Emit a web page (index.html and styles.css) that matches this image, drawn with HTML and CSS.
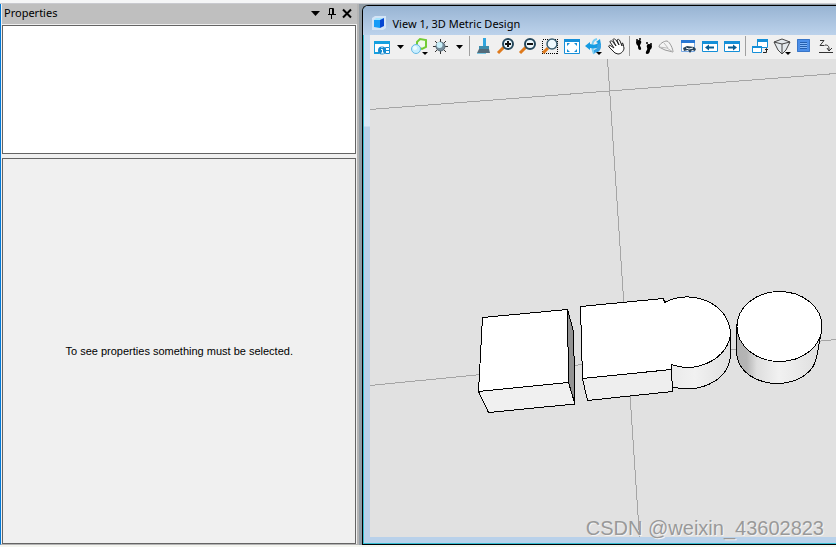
FILE: index.html
```html
<!DOCTYPE html>
<html lang="en">
<head>
<meta charset="utf-8">
<title>View 1, 3D Metric Design</title>
<link rel="stylesheet" href="styles.css">
</head>
<body>
<div class="ribbon-edge"></div>
<main class="workspace">
  <section class="panel" aria-labelledby="panel-title">
    <header class="panel-header">
      <h2 class="panel-title" id="panel-title">Properties</h2>
      <button class="panel-button" aria-label="Panel menu"><svg width="16" height="16"><path d="M3 5h9L7.500 10z"/></svg></button>
      <button class="panel-button" aria-label="Pin"><svg width="16" height="16" fill="none" stroke="#000"><path d="M5.500 8V2.500h4V8M4 8.500h8M7.500 9v4" /><path d="M9 3v5" stroke-width="2"/></svg></button>
      <button class="panel-button" aria-label="Close"><svg width="16" height="16" fill="none" stroke="#000" stroke-width="2"><path d="M3 3.500l8 8M11 3.500l-8 8"/></svg></button>
    </header>
    <div class="selection-box"></div>
    <div class="details-box"><p>To see properties something must be selected.</p></div>
  </section>

  <section class="view" aria-labelledby="view-title">
    <header class="view-header">
      <svg width="16" height="16"><path d="M1 3l3-2h11v12l-3 2H1z" fill="#d3e4f6"/><path d="M3 5l2-2h8l-2 2z" fill="#a4e4ff"/><path d="M3 5h6v8l-6-1z" fill="#169cf8"/><path d="M9 5l4-2v8l-4 2z" fill="#0546d2"/></svg>
      <h1 class="view-title" id="view-title">View 1, 3D Metric Design</h1>
    </header>
    <div class="toolbar" role="toolbar" aria-label="View tools">
      <button class="tool" aria-label="View attributes"><svg width="22" height="22"><path d="M3.500 18V6.500h15V12" fill="#fff" stroke="#16a0df"/><path d="M3 6h16v3H3z" fill="#16a0df"/><path d="M3 18h5" stroke="#16a0df" stroke-width="2"/><circle cx="11" cy="15.500" r="4" fill="#168bd0"/><path d="M10 14.500h1.500V18M10 18h3M11 12v1" stroke="#fff" fill="none"/><path d="M14.500 12.500h4v6h-4z" fill="#fff" stroke="#168bd0"/><path d="M15 15.500h3" stroke="#168bd0"/></svg></button>
      <button class="tool tool-menu" aria-label="View attributes menu"><svg width="15" height="22"><path d="M4 10h7l-3.500 4z"/></svg></button>
      <button class="tool" aria-label="Display style"><svg width="22" height="22"><path d="M9 7l3-3 6 1v7l-4 2-5-2z" fill="#f1f9eb" stroke="#72cc35" stroke-width="2"/><circle cx="8" cy="14" r="4.500" fill="#c8eeff" stroke="#65b8e3"/><circle cx="7" cy="13" r="2" fill="#effcff"/><path d="M14 17h6l-3 3z"/></svg></button>
      <button class="tool" aria-label="Adjust brightness"><svg width="22" height="22"><path d="M10.500 4v15M3 11.500h15M5 6l11 11M16 6L5 17" stroke="#333"/><circle cx="10.500" cy="11.500" r="4.500" fill="#778d9b" stroke="#596c78"/><circle cx="9.500" cy="10" r="3" fill="#c9f0fb"/></svg></button>
      <button class="tool tool-menu" aria-label="Brightness menu"><svg width="15" height="22"><path d="M4 10h7l-3.500 4z"/></svg></button>
      <span class="separator"></span>
      <button class="tool" aria-label="Update view"><svg width="22" height="22"><path d="M10 3h3v8h-3z" fill="#30a5df"/><path d="M6 11h10v3H6z" fill="#3f8dad"/><path d="M6 14h10l1 4H4z" fill="#536b7a"/><path d="M4 18.500h9" stroke="#79c8e5"/></svg></button>
      <button class="tool" aria-label="Zoom in"><svg width="22" height="22"><path d="M3 18l6-6" stroke="#df7a1c" stroke-width="3"/><circle cx="13" cy="9" r="5" fill="#eefaff" stroke="#24475c" stroke-width="2"/><path d="M10 9h6M13 6v6" stroke="#111" stroke-width="2"/></svg></button>
      <button class="tool" aria-label="Zoom out"><svg width="22" height="22"><path d="M3 18l6-6" stroke="#df7a1c" stroke-width="3"/><circle cx="13" cy="9" r="5" fill="#eefaff" stroke="#24475c" stroke-width="2"/><path d="M10 9h6" stroke="#111" stroke-width="2"/></svg></button>
      <button class="tool" aria-label="Window area"><svg width="22" height="22"><path d="M3.500 4.500h15v14h-15z" fill="none" stroke="#000" stroke-dasharray="1 1" shape-rendering="crispEdges"/><path d="M4 18l5-5" stroke="#df7a1c" stroke-width="3"/><circle cx="13" cy="9" r="5" fill="#eefaff" stroke="#3b5f72" stroke-width="1.500"/></svg></button>
      <button class="tool" aria-label="Fit view"><svg width="22" height="22"><path d="M3.500 4.500h15v14h-15z" fill="#fff" stroke="#168fd8"/><path d="M3 4h16v3H3z" fill="#168fd8"/><path d="M6 8h3L6 11zM16 8v3l-3-3zM6 17v-3l3 3zM16 17h-3l3-3z" fill="#168fd8"/></svg></button>
      <button class="tool" aria-label="Rotate view"><svg width="22" height="22"><path d="M14 4c-5 1-6 7-3 15" fill="none" stroke="#79cdf3" stroke-width="2"/><path d="M2 11l5-4v2c3 1 6 1 8-1l-2-1 4-3 1 6c-2 3-6 4-11 3v2z" fill="#159be2"/><path d="M14 10l3-2c2 3 1 7-2 9l-4 1v-3c3-1 4-3 3-5z" fill="#37a1e2"/><path d="M13 17h6l-3 3z"/></svg></button>
      <button class="tool" aria-label="Pan view"><svg width="22" height="22"><path d="M10 18L4 12c-1-2 1-2 2-1l3 2-4-6c0-2 2-1 3 0l3 4-3-6c0-2 2-1 3 0l3 5-2-5c1-1 2-1 3 1l2 5v-3c2 0 1 3 2 5 0 3-3 6-6 6z" fill="#fff" stroke="#222"/></svg></button>
      <span class="separator"></span>
      <button class="tool" aria-label="Walk"><svg width="22" height="22"><path d="M3 7c0-2 4-3 5-1s-1 3-1 5c1 1 2 4 0 4s-2-3-2-4c-1-1-2-2-2-4zM14 10c1-2 5-1 5 1s-1 3-2 4c0 2-1 4-3 4s-1-3 0-4c1-2-1-3 0-5z"/><circle cx="4" cy="5" r="1"/><circle cx="7" cy="4" r="1"/><circle cx="14" cy="8" r="1"/><circle cx="18" cy="9" r="1"/></svg></button>
      <button class="tool" aria-label="Fly"><svg width="22" height="22"><path d="M4 12c0-3 5-6 8-6 3 1 6 8 6 11l-8-2z" fill="#f4f4f4" stroke="#999"/><path d="M4 12l8 1 6 4M9 8l4 5" fill="none" stroke="#bbb"/></svg></button>
      <button class="tool" aria-label="Navigate view"><svg width="22" height="22"><path d="M4.500 5.500h13v11h-13z" fill="#fff" stroke="#79a9e4"/><path d="M4 5h14v3H4z" fill="#2877d4"/><path d="M6 13l4-2 7 1 2 2-1 2-3-1-2 3-2-3-4 1z" fill="#27435b"/><path d="M9 13l3 1 4-1" fill="none" stroke="#fff"/></svg></button>
      <button class="tool" aria-label="View previous"><svg width="22" height="22"><path d="M3.500 6.500h15v10h-15z" fill="#fff" stroke="#148fd8"/><path d="M3 6h16v3H3z" fill="#148fd8"/><path d="M6 12.500l4-3v2h5v2h-5v2z" fill="#075c92"/></svg></button>
      <button class="tool" aria-label="View next"><svg width="22" height="22"><path d="M3.500 6.500h15v10h-15z" fill="#fff" stroke="#148fd8"/><path d="M3 6h16v3H3z" fill="#148fd8"/><path d="M16 12.500l-4-3v2H7v2h5v2z" fill="#075c92"/></svg></button>
      <span class="separator"></span>
      <button class="tool" aria-label="Copy view"><svg width="22" height="22"><path d="M8.500 5.500h10v7h-10zM3.500 11.500h9v6h-9z" fill="#fff" stroke="#148fd8"/><path d="M8 4h11v3H8zM3 11h10v2H3z" fill="#148fd8"/><path d="M14 17.500h3.500V14M16 15l1.500-1.500L19 15" fill="none" stroke="#222"/></svg></button>
      <button class="tool" aria-label="View perspective"><svg width="22" height="22"><path d="M3 7l8-3 8 3-4 8-4 4-4-4z" fill="#e4e9ed" stroke="#444"/><path d="M3 7l8 2 8-2M11 9v10" fill="none" stroke="#444"/><path d="M14 17h6l-3 3z"/></svg></button>
      <button class="tool" aria-label="Clip volume"><svg width="22" height="22"><rect x="4" y="4" width="13" height="13" rx="1" fill="#4c8fe9"/><path d="M4.500 4.500h12v12h-12z" fill="none" stroke="#3976c8"/><path d="M7 7h7v6H7z" fill="#83b8fa"/><path d="M7 7.500h7M7 9.500h7M7 11.500h7M7 13.500h7" stroke="#245fae"/></svg></button>
      <button class="tool" aria-label="Set active depth"><svg width="22" height="22"><path d="M5 5.500h4l-4 5h4.500M4 17.500h14M10 10c4 0 4 2 4 5M12 13l2 3 3-3" fill="none" stroke="#333"/></svg></button>
    </div>
    <div class="canvas">
      <svg class="scene" role="img" aria-label="Box, rounded block and cylinder">
        <defs>
          <linearGradient id="round" x1="0" x2="1"><stop offset="0" stop-color="#eaeaea"/><stop offset=".4" stop-color="#f1f1f1"/><stop offset="1" stop-color="#dfdfdf"/></linearGradient>
          <linearGradient id="cylinder" x1="0" x2="1"><stop offset="0" stop-color="#b2b2b2"/><stop offset=".12" stop-color="#b5b5b5"/><stop offset=".24" stop-color="#dedede"/><stop offset=".5" stop-color="#f1f1f1"/><stop offset="1" stop-color="#dedede"/></linearGradient>
        </defs>
        <g transform="translate(-370 -59)" shape-rendering="crispEdges">
          <path class="grid-line" d="M370 109.500L836 73.500M370 385.500L836 339.500M607.500 59L639.500 537"/>
          <g class="solid">
            <path fill="#f0f0f0" d="M478.500 391.500L568.500 382.500l6.500 21.500-86.500 8.500z"/>
            <path fill="#929292" d="M567.500 309.500l6 22 1.500 72.500-6.500-21.500z"/>
            <path fill="#fff" d="M482.500 317.500l85-8 1 73-90 9z"/>
            <path fill="url(#round)" d="M671 364.500V386.500C696 394 727 383 730.500 357V332z"/>
            <path fill="#eee" d="M582.500 378.500l89-9 1 22-85 9z"/>
            <path fill="#fff" d="M580.500 306.500l83-8 1 4C691 288 729 303 730.500 333C729 358 698 374 671 364.500V369.500L582.500 378.500z"/>
            <path fill="url(#cylinder)" d="M736.500 325V352C737 371 755 383.500 778 383.500C800 383 815 371 817 355L821.500 331z"/>
            <ellipse cx="779.500" cy="326.500" rx="42.500" ry="35"/>
          </g>
        </g>
      </svg>
      <span class="watermark">CSDN @weixin_43602823</span>
    </div>
  </section>
</main>
<div class="status-edge"></div>
</body>
</html>
```
FILE: styles.css
```css
* { box-sizing: border-box; }

body {
  display: flex;
  flex-direction: column;
  height: 100vh;
  margin: 0;
  overflow: hidden;
  background: #f0f0f0;
  color: #000;
  font-family: "Liberation Sans", sans-serif;
  font-size: 11px;
}

h1, h2, p { margin: 0; font-weight: 400; }

button { border: 0; padding: 0; background: none; }

svg { display: block; }

.ribbon-edge {
  height: 4px;
  background: #f5f6f7;
  border-bottom: 1px solid #c9cacf;
}

.workspace {
  flex: 1;
  min-height: 0;
  display: grid;
  grid-template-columns: 43% 1fr;
  column-gap: 3px;
  background: #919ca5;
}

.panel {
  display: flex;
  flex-direction: column;
  background: #f0f0f0;
  border-left: 1px solid #0078d7;
  border-right: 3px solid #b4b4b4;
  border-right-width: 2px;
  border-bottom: 1px solid #b4b4b4;
  padding: 0 1px;
}

.panel-header {
  display: flex;
  align-items: center;
  height: 20px;
  padding: 0 1px 0 2px;
  margin: 0 -1px 1px 0;
  background: #bfbfbf;
}

.panel-title {
  flex: 1;
  font-family: "Noto Sans", sans-serif;
  font-size: 11px;
  line-height: 18px;
  padding-bottom: 2px;
}

.panel-button { width: 16px; height: 16px; }

.selection-box {
  flex: 0 1 129px;
  border: 1px solid #646464;
  background: #fff;
}

.details-box {
  flex: 1;
  display: grid;
  place-items: center;
  margin-top: 4px;
  border: 1px solid #646464;
}

.view {
  display: flex;
  flex-direction: column;
  min-width: 0;
  margin-top: 1px;
  padding: 0 0 7px 7px;
  background: linear-gradient(#c2d7ee, #dbe8f7 120px, #b9d1ea 121px);
  border: 1px solid #000;
  border-right: 0;
  border-radius: 6px 0 0 0;
  box-shadow: inset 1px -1px #35bdd2;
}

.view-header {
  display: flex;
  align-items: center;
  gap: 5px;
  height: 29px;
  margin-left: -7px;
  padding: 5px 0 0 8px;
  background: linear-gradient(#98b4d3, #bcd2eb);
  border-radius: 5px 0 0 0;
}

.view-title {
  font-family: "Noto Sans", sans-serif;
  font-size: 11px;
}

.toolbar {
  display: flex;
  flex: none;
  height: 24px;
  padding-left: 1px;
  overflow: hidden;
  background: #f0f0f0;
}

.tool { flex: none; width: 22px; height: 22px; }

.tool-menu { width: 15px; }

.separator {
  flex: none;
  width: 1px;
  height: 20px;
  margin: 1px 3px 0 2px;
  background: #a0a0a0;
}

.canvas {
  position: relative;
  flex: 1;
  min-height: 0;
  background: #e1e1e1;
}

.scene { width: 100%; height: 100%; }

.grid-line { fill: none; stroke: #a5a5a5; }

.solid { fill: #fff; stroke: #000; }

.watermark {
  position: absolute;
  right: 12px;
  bottom: -3px;
  color: #999;
  font-size: 20px;
  line-height: 24px;
  text-shadow: 1px 1px #f4f4f4;
}

.status-edge { height: 2px; background: #f4f5f0; }
```
